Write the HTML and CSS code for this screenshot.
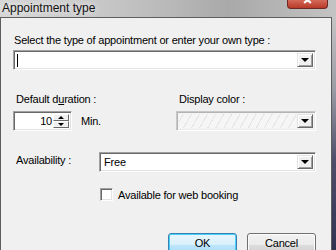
FILE: index.html
```html
<!DOCTYPE html>
<html lang="en">
<head>
  <meta charset="UTF-8" />
  <title>Appointment type</title>
  <link rel="stylesheet" href="styles.css">
</head>
<body>
  <div class="window">
    <div class="titlebar">
      <span class="title">Appointment type</span>
      <span class="close-btn">
        <svg width="41" height="9" viewBox="0 0 41 9"><path d="M17 -4 L24 3 M24 -4 L17 3" stroke="#fff" stroke-width="2.2" fill="none"/></svg>
      </span>
    </div>
    <div class="window-body">
      <div class="client">
        <div class="lbl lbl-type">Select the type of appointment or enter your own type :</div>
        <div class="combo combo-type">
          <div class="combo-field"><span class="caret"></span></div>
          <span class="drop-btn"><span class="tri-down"></span></span>
        </div>

        <div class="row-duration">
          <div class="col-duration">
            <div class="lbl lbl-indent">Default d<u>u</u>ration :</div>
            <div class="spin-row">
              <div class="spin">
                <span class="spin-val">10</span>
                <span class="spin-btns">
                  <span class="spin-btn"><span class="tri-up"></span></span>
                  <span class="spin-btn"><span class="tri-down small"></span></span>
                </span>
              </div>
              <span class="unit">Min.</span>
            </div>
          </div>
          <div class="col-color">
            <div class="lbl lbl-indent">Display color :</div>
            <div class="combo combo-color">
              <div class="combo-field hatch"></div>
              <span class="drop-btn"><span class="tri-down"></span></span>
            </div>
          </div>
        </div>

        <div class="row-avail">
          <span class="lbl lbl-avail">Availability :</span>
          <div class="combo combo-avail">
            <div class="combo-field"><span class="field-text">Free</span></div>
            <span class="drop-btn"><span class="tri-down"></span></span>
          </div>
        </div>

        <div class="check-row">
          <span class="checkbox"></span>
          <span class="check-label">Available for web booking</span>
        </div>

        <div class="buttons">
          <button class="btn btn-default">OK</button>
          <button class="btn">Cancel</button>
        </div>
      </div>
      <div class="frame-right"></div>
    </div>
  </div>
</body>
</html>
```

FILE: styles.css
```css
* {
  box-sizing: border-box;
}
html, body {
  margin: 0;
  width: 336px;
  height: 250px;
  overflow: hidden;
}
body {
  font-family: 'Liberation Sans', Arial, sans-serif;
  font-size: 11px;
  letter-spacing: -0.2px;
  color: #000;
  background: #9a9aa0;
}
.window {
  display: flex;
  flex-direction: column;
  height: 250px;
}
.titlebar {
  height: 17px;
  flex: none;
  display: flex;
  align-items: flex-start;
  background: linear-gradient(90deg, #d6d6d6 0%, #cbcbcb 25%, #b9b9b9 50%, #a9a9a9 68%, #b4b4b4 82%, #c4c4c4 100%);
}
.title {
  font-family: 'Liberation Sans', Arial, sans-serif;
  font-size: 12px;
  letter-spacing: 0;
  line-height: 14px;
  margin: 1px 0 0 2px;
  color: #111;
  text-shadow: 0 0 6px #fff;
}
.close-btn {
  margin-left: auto;
  margin-right: 8px;
  width: 41px;
  height: 9px;
  border: 1px solid #6d2a24;
  border-top: none;
  border-radius: 0 0 4px 4px;
  background: linear-gradient(#d56a5a, #b83a28);
  overflow: hidden;
  display: flex;
}
.close-btn svg {
  display: block;
}
.window-body {
  flex: 1;
  display: flex;
}
.client {
  width: 332px;
  background: #f0f0f0;
  border: 1px solid #5e5e5e;
  border-bottom: none;
  padding: 16px 15px 0 12px;
}
.frame-right {
  flex: 1;
  background: linear-gradient(#c4c4c4 0%, #9c9ca6 30%, #4e4e6a 60%, #2e3050 100%);
}
.lbl {
  line-height: 13px;
  white-space: nowrap;
}
.lbl-type {
  padding-left: 1px;
}
.lbl-indent {
  padding-left: 3px;
}

/* combo boxes */
.combo {
  display: flex;
  height: 20px;
  background: #fff;
  border-top: 1px solid #a0a0a0;
  border-left: 1px solid #a0a0a0;
  border-right: 1px solid #fff;
  border-bottom: 1px solid #fff;
  box-shadow: inset 1px 1px 0 #696969, inset -1px -1px 0 #e3e3e3;
  padding: 2px;
}
.combo-field {
  flex: 1;
  display: flex;
  align-items: center;
}
.combo-type {
  margin-top: 3px;
}
.caret {
  width: 1px;
  height: 13px;
  margin-left: 1px;
  background: #000;
}
.drop-btn {
  width: 16px;
  flex: none;
  display: flex;
  align-items: center;
  justify-content: center;
  background: #f0f0f0;
  border-top: 1px solid #e3e3e3;
  border-left: 1px solid #e3e3e3;
  border-right: 1px solid #696969;
  border-bottom: 1px solid #696969;
  box-shadow: inset 1px 1px 0 #fff, inset -1px -1px 0 #a0a0a0;
}
.tri-down {
  width: 0;
  height: 0;
  border-left: 4px solid transparent;
  border-right: 4px solid transparent;
  border-top: 4px solid #000;
}
.tri-up {
  width: 0;
  height: 0;
  border-left: 3px solid transparent;
  border-right: 3px solid transparent;
  border-bottom: 3px solid #000;
}
.tri-down.small {
  border-left-width: 3px;
  border-right-width: 3px;
  border-top-width: 3px;
}

/* duration / color row */
.row-duration {
  display: flex;
  margin-top: 23px;
}
.col-duration {
  width: 163px;
  flex: none;
}
.col-color {
  flex: 1;
}
.spin-row {
  display: flex;
  align-items: center;
  margin-top: 5px;
}
.spin {
  display: flex;
  width: 59px;
  height: 20px;
  background: #fff;
  border-top: 1px solid #a0a0a0;
  border-left: 1px solid #a0a0a0;
  border-right: 1px solid #fff;
  border-bottom: 1px solid #fff;
  box-shadow: inset 1px 1px 0 #696969, inset -1px -1px 0 #e3e3e3;
  padding: 2px;
}
.spin-val {
  flex: 1;
  text-align: right;
  line-height: 14px;
  padding-right: 1px;
}
.spin-btns {
  width: 16px;
  display: flex;
  flex-direction: column;
}
.spin-btn {
  flex: 1;
  display: flex;
  align-items: center;
  justify-content: center;
  background: #f0f0f0;
  border-top: 1px solid #fff;
  border-left: 1px solid #fff;
  border-right: 1px solid #696969;
  border-bottom: 1px solid #696969;
}
.unit {
  margin-left: 9px;
}
.combo-color {
  margin-top: 5px;
  border-top-color: #c8c8c8;
  border-left-color: #c8c8c8;
  box-shadow: inset 1px 1px 0 #b4b4b4, inset -1px -1px 0 #ececec;
  background: #f4f4f4;
}
.hatch {
  background: repeating-linear-gradient(-60deg, #f6f6f6 0 6px, #e4e4e4 6px 7px);
  margin-right: 1px;
}

/* availability */
.row-avail {
  display: flex;
  align-items: center;
  margin-top: 21px;
}
.lbl-avail {
  width: 86px;
  flex: none;
  padding-left: 3px;
  margin-top: -4px;
}
.combo-avail {
  flex: 1;
}
.field-text {
  padding-left: 2px;
}

.check-row {
  display: flex;
  align-items: center;
  margin: 16px 0 0 87px;
}
.checkbox {
  width: 13px;
  height: 13px;
  background: #fff;
  border-top: 1px solid #a0a0a0;
  border-left: 1px solid #a0a0a0;
  border-right: 1px solid #fff;
  border-bottom: 1px solid #fff;
  box-shadow: inset 1px 1px 0 #696969, inset -1px -1px 0 #e3e3e3;
}
.check-label {
  margin-left: 5px;
}

/* buttons */
.buttons {
  display: flex;
  gap: 10px;
  margin-top: 32px;
  padding-left: 155px;
}
.btn {
  width: 73px;
  height: 23px;
  font-family: 'Liberation Sans', Arial, sans-serif;
  font-size: 11px;
  letter-spacing: -0.2px;
  line-height: 13px;
  color: #000;
  border: 1px solid #707070;
  border-radius: 3px;
  background: linear-gradient(#f2f2f2 0%, #ebebeb 50%, #dddddd 51%, #cfcfcf 100%);
  box-shadow: inset 0 0 0 1px #fcfcfc;
  padding: 0 0 3px;
}
.btn-default {
  border-color: #3c7fb1;
  background: linear-gradient(#eaf6fd 0%, #d9f0fc 50%, #bee6fd 51%, #a7d9f5 100%);
  box-shadow: inset 0 0 0 1px #48d0fb;
}
```
